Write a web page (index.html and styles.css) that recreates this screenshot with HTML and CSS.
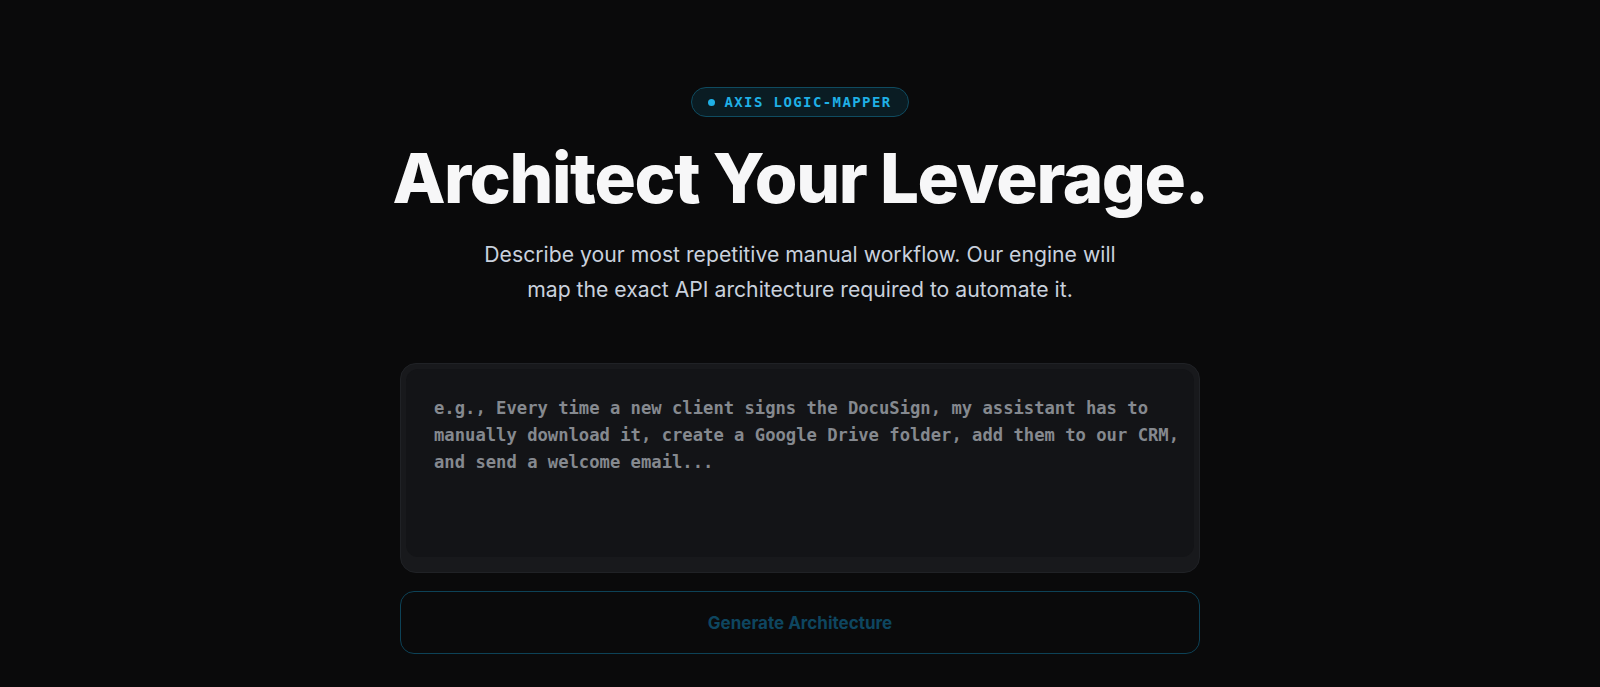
FILE: index.html
```html
<!DOCTYPE html>
<html lang="en">
<head>
  <meta charset="UTF-8" />
  <meta name="viewport" content="width=device-width, initial-scale=1.0"/>
  <title>Axis Logic-Mapper</title>
  <link rel="stylesheet" href="styles.css">
</head>
<body>
  <main class="mapper">
    <div class="badge">
      <span class="badge-dot"></span>
      AXIS LOGIC-MAPPER
    </div>

    <h1 class="headline">Architect Your Leverage.</h1>

    <p class="lead">
      Describe your most repetitive manual workflow. Our engine will
      map the exact API architecture required to automate it.
    </p>

    <div class="prompt-box">
      <textarea class="prompt-input" placeholder="e.g., Every time a new client signs the DocuSign, my assistant has to manually download it, create a Google Drive folder, add them to our CRM, and send a welcome email..."></textarea>
    </div>

    <button class="generate-btn" disabled>Generate Architecture</button>
  </main>
</body>
</html>
```

FILE: styles.css
```css
html, body {
  margin: 0;
  background-color: #0a0a0b;
}

body {
  font-family: Inter, 'Noto Sans', sans-serif;
  color: #f4f4f5;
}

.mapper {
  width: 800px;
  margin: 0 auto;
  padding-top: 87px;
  display: flex;
  flex-direction: column;
  align-items: center;
}

.badge {
  display: flex;
  align-items: center;
  gap: 9px;
  height: 28px;
  padding: 0 16px;
  border: 1px solid #0f4b60;
  border-radius: 999px;
  background-color: #0a1c23;
  color: #1fb0e6;
  font-family: 'DejaVu Sans Mono', monospace;
  font-weight: bold;
  font-size: 14px;
  letter-spacing: 0.1em;
}

.badge-dot {
  width: 7px;
  height: 7px;
  border-radius: 50%;
  background-color: #1fb0e6;
}

.headline {
  margin: 22px 0 0;
  font-size: 69px;
  font-weight: 800;
  letter-spacing: -0.02em;
  line-height: 1.15;
  color: #f7f7f8;
  white-space: nowrap;
}

.lead {
  margin: 19px 0 0;
  max-width: 680px;
  text-align: center;
  font-size: 21.2px;
  line-height: 35px;
  color: #c9d1dd;
}

.prompt-box {
  margin-top: 56px;
  width: 100%;
  box-sizing: border-box;
  padding: 5px 5px 15px;
  background-color: #18191c;
  border: 1px solid #202226;
  border-radius: 16px;
}

.prompt-input {
  display: block;
  width: 100%;
  height: 188px;
  box-sizing: border-box;
  padding: 26px 14px 22px 28px;
  border: none;
  border-radius: 12px;
  background-color: #131417;
  resize: none;
  outline: none;
  color: #d4d4d8;
  font-family: 'DejaVu Sans Mono', monospace;
  font-weight: bold;
  font-size: 17.2px;
  line-height: 26.7px;
}

.prompt-input::placeholder {
  color: #85898f;
}

.generate-btn {
  margin-top: 18px;
  width: 100%;
  height: 63px;
  border: 1px solid #0d4257;
  border-radius: 14px;
  background-color: #0a0a0b;
  color: #0e4660;
  font-family: Inter, sans-serif;
  font-weight: 700;
  font-size: 17px;
}
```
